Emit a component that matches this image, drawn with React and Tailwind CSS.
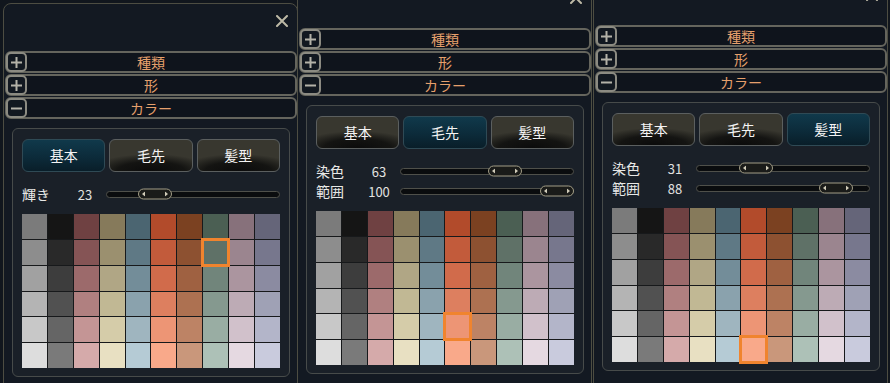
import React from "react";

const palette = [
  ["#7b7b7b", "#8d8d8d", "#a1a1a1", "#b4b4b4", "#c8c8c8", "#dddddd"],
  ["#151515", "#292929", "#3d3d3d", "#515151", "#656565", "#7a7a7a"],
  ["#6f4142", "#855455", "#9c6a6b", "#b08080", "#c49595", "#d5aaaa"],
  ["#867a5b", "#9b906f", "#b0a685", "#c1b894", "#d5cca9", "#e8e0c2"],
  ["#4b6571", "#5f7985", "#738d99", "#8aa2ad", "#9fb5bf", "#b5cbd5"],
  ["#b24b2b", "#c25b3b", "#d16b4b", "#dd7f5f", "#ed9575", "#f9a98a"],
  ["#7b4121", "#8d5131", "#9f6141", "#ad7151", "#bd8365", "#c9977b"],
  ["#4b5f53", "#5f7167", "#71857b", "#85998f", "#99ada3", "#adc1b7"],
  ["#87717b", "#9b858f", "#ab959f", "#bdabb5", "#d1c1cb", "#e5d9e1"],
  ["#656579", "#77778d", "#8b8ba1", "#9fa1b5", "#b3b5c9", "#c9cbdd"],
];

const panels = [
  { wrap: "w-[294px] mt-0", tab: 0, sliders: [["輝き", 23]], sel: [7, 1] },
  { wrap: "w-[296px] -mt-[23px]", tab: 1, sliders: [["染色", 63], ["範囲", 100]], sel: [5, 4] },
  { wrap: "w-[300px] -mt-[26px]", tab: 2, sliders: [["染色", 31], ["範囲", 88]], sel: [5, 5] },
];

const tabs = ["基本", "毛先", "髪型"];
const sections = [
  { label: "種類", open: false },
  { label: "形", open: false },
  { label: "カラー", open: true },
];

function CloseX() {
  return (
    <svg width="12" height="12" viewBox="0 0 12 12">
      <path d="M1 1 L11 11 M11 1 L1 11" stroke="#bdb9a6" strokeWidth="2" strokeLinecap="round" />
    </svg>
  );
}

function ToggleBox({ open }) {
  return (
    <div className="absolute -left-px -top-px w-[21px] h-[20px] rounded-[5px] border-2 border-[#8c8b82] bg-[#121820] flex items-center justify-center">
      <svg width="11" height="11" viewBox="0 0 11 11">
        <path d={open ? "M0 5.5 H11" : "M0 5.5 H11 M5.5 0 V11"} stroke="#b4b2a8" strokeWidth="2" />
      </svg>
    </div>
  );
}

function Slider({ label, value }) {
  return (
    <div className="flex items-center h-[20px]">
      <div className="w-[44px] text-[14px] leading-none text-[#e8e8e6]">{label}</div>
      <div className="w-[38px] text-center text-[13px] leading-none text-[#e2e2e0]">{value}</div>
      <div className="relative flex-1 ml-[2px] h-[7px] rounded-full border border-[#4f504a] bg-[#0a0c0e]">
        <div
          className="absolute top-1/2 -translate-y-1/2 w-[34px] h-[11px] rounded-full border-[1.5px] border-[#a29d86] bg-[#1a1b19] flex items-center justify-between px-[3px]"
          style={{ left: `${value * 1.4 - 1}px` }}
        >
          <svg width="3" height="5" viewBox="0 0 3 5">
            <path d="M3 0 L0 2.5 L3 5 Z" fill="#cfcab8" />
          </svg>
          <svg width="3" height="5" viewBox="0 0 3 5">
            <path d="M0 0 L3 2.5 L0 5 Z" fill="#cfcab8" />
          </svg>
        </div>
      </div>
    </div>
  );
}

function Panel({ tab, sliders, sel }) {
  return (
    <div className="mt-[3px] ml-[3px] w-[295px] h-[420px] rounded-lg border border-[#4d4d42] bg-[#131922]">
      <div className="h-[47px] flex justify-end items-start pt-[11px] pr-[9px]">
        <CloseX />
      </div>

      <div className="flex flex-col gap-px pl-px">
        {sections.map((s) => (
          <div
            key={s.label}
            className="relative h-[22px] rounded-md border-2 border-[#65655d] bg-[#0f141c] flex items-center justify-center text-[14px] leading-none text-[#e6a06c]"
          >
            <ToggleBox open={s.open} />
            {s.label}
          </div>
        ))}
      </div>

      <div className="mt-[9px] ml-[8px] w-[278px] rounded-md border border-[#474b4a] bg-[#1a2028] pt-[10px] px-[9px] pb-[8px]">
        <div className="grid grid-cols-3 gap-[4px] h-[33px]">
          {tabs.map((t, i) =>
            i === tab ? (
              <div
                key={t}
                className="rounded-md border border-[#2f4a55] bg-[linear-gradient(180deg,#10394b_0%,#0c2b3a_55%,#091e29_100%)] flex items-center justify-center text-[14px] text-[#f4f4f4]"
              >
                {t}
              </div>
            ) : (
              <div
                key={t}
                className="rounded-md border border-[#5b5f5f] bg-[radial-gradient(ellipse_75%_55%_at_50%_100%,#0b0b0b_0%,#141412_55%,#38372f_100%)] flex items-center justify-center text-[14px] text-[#f4f4f4]"
              >
                {t}
              </div>
            )
          )}
        </div>

        <div className="mt-[12px] flex flex-col">
          {sliders.map(([l, v]) => (
            <Slider key={l} label={l} value={v} />
          ))}
        </div>

        <div className="mt-[10px] grid grid-cols-10 grid-rows-6 gap-px h-[154px] bg-[#17191b]">
          {[0, 1, 2, 3, 4, 5].map((r) =>
            palette.map((col, c) => (
              <div key={`${r}-${c}`} className="relative" style={{ background: col[r] }}>
                {sel[0] === c && sel[1] === r && (
                  <div className="absolute -inset-[2px] border-[3px] border-[#f0842e] z-10" />
                )}
              </div>
            ))
          )}
        </div>
      </div>
    </div>
  );
}

export default function App() {
  return (
    <div className="w-[890px] h-[383px] overflow-hidden bg-[#11161d] flex items-start font-['Noto_Sans_CJK_JP','Noto_Sans',sans-serif]">
      {panels.map((p, i) => (
        <div key={i} className={`shrink-0 ${p.wrap}`}>
          <Panel tab={p.tab} sliders={p.sliders} sel={p.sel} />
        </div>
      ))}
    </div>
  );
}
